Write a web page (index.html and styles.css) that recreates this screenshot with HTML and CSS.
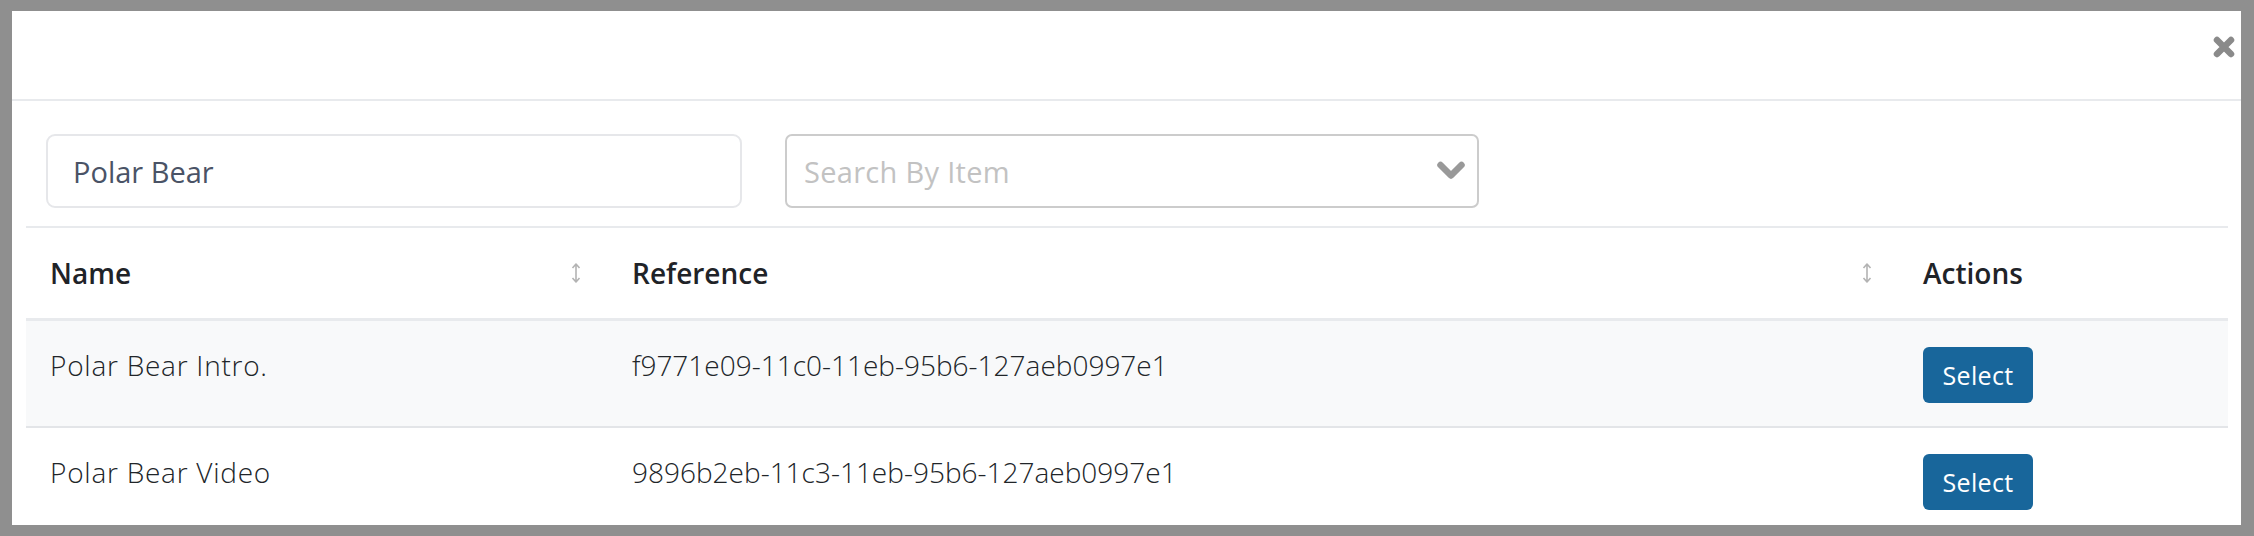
FILE: index.html
```html
<!DOCTYPE html>
<html lang="en">
<head>
<meta charset="utf-8">
<title>Select item</title>
<link rel="stylesheet" href="styles.css">
</head>
<body>
<div class="modal">
  <div class="modal-header">
    <button class="close" aria-label="Close">
      <svg viewBox="0 0 22 22" width="22" height="22"><path d="M4 4 L18 18 M18 4 L4 18" stroke="#8a8a8a" stroke-width="6.5" stroke-linecap="round"/></svg>
    </button>
  </div>
  <div class="modal-body">
    <div class="filters">
      <input class="text-input" type="text" value="Polar Bear">
      <div class="select">
        <span class="placeholder">Search By Item</span>
        <svg class="chevron" viewBox="0 0 28 20" width="28" height="20"><polyline points="3.5,4 14,14.5 24.5,4" fill="none" stroke="#999" stroke-width="6.5" stroke-linecap="round" stroke-linejoin="round"/></svg>
      </div>
    </div>
    <table class="grid">
      <colgroup>
        <col class="c-name"><col class="c-ref"><col class="c-act">
      </colgroup>
      <thead>
        <tr>
          <th><div class="th-in"><span>Name</span><svg class="sort" viewBox="0 0 10 22" width="10" height="22"><path d="M5 2 V20 M1.5 6 L5 2 L8.5 6 M1.5 16 L5 20 L8.5 16" fill="none" stroke="#b3b3b3" stroke-width="1.6" stroke-linejoin="round"/></svg></div></th>
          <th><div class="th-in"><span>Reference</span><svg class="sort" viewBox="0 0 10 22" width="10" height="22"><path d="M5 2 V20 M1.5 6 L5 2 L8.5 6 M1.5 16 L5 20 L8.5 16" fill="none" stroke="#b3b3b3" stroke-width="1.6" stroke-linejoin="round"/></svg></div></th>
          <th><div class="th-in"><span>Actions</span></div></th>
        </tr>
      </thead>
      <tbody>
        <tr class="odd">
          <td class="name">Polar Bear Intro.</td>
          <td>f9771e09-11c0-11eb-95b6-127aeb0997e1</td>
          <td><button class="btn">Select</button></td>
        </tr>
        <tr>
          <td class="name">Polar Bear Video</td>
          <td>9896b2eb-11c3-11eb-95b6-127aeb0997e1</td>
          <td><button class="btn">Select</button></td>
        </tr>
      </tbody>
    </table>
  </div>
</div>
</body>
</html>
```

FILE: styles.css
```css
* { box-sizing: border-box; }
html, body { margin: 0; padding: 0; }
body {
  background: #8f8f8f;
  font-family: "Open Sans", "Liberation Sans", sans-serif;
  color: #212529;
}
.modal {
  margin: 11px 13px 11px 12px;
  height: 514px;
  background: #fff;
  overflow: hidden;
}
.modal-header {
  height: 90px;
  border-bottom: 2px solid #e8eaed;
  position: relative;
}
.close {
  position: absolute;
  top: 25px;
  right: 6px;
  width: 22px;
  height: 22px;
  padding: 0;
  border: 0;
  background: none;
}
.close svg { display: block; }
.modal-body {
  padding: 33px 13px 0 14px;
}
.filters {
  display: flex;
  gap: 43px;
  padding-left: 20px;
  margin-bottom: 18px;
}
.text-input {
  width: 696px;
  height: 74px;
  border: 2px solid #e6e7ea;
  border-radius: 9px;
  padding: 0 25px;
  font-family: inherit;
  font-size: 29px;
  color: #4a5366;
  outline: none;
}
.select {
  width: 694px;
  height: 74px;
  border: 2px solid #cccccc;
  border-radius: 7px;
  display: flex;
  align-items: center;
  justify-content: space-between;
  padding: 0 12px 0 17px;
}
.placeholder {
  font-size: 29px;
  letter-spacing: 0.3px;
  color: #c2c2c2;
}
.chevron { display: block; }
.grid {
  width: 2202px;
  border-collapse: collapse;
  table-layout: fixed;
  border-top: 2px solid #e8eaed;
}
.c-name { width: 582px; }
.c-ref { width: 1291px; }
.c-act { width: 329px; }
thead tr { height: 92px; }
th {
  padding: 0 27px 0 24px;
  text-align: left;
  font-size: 28px;
  font-weight: 600;
  color: #1f2328;
  border-bottom: 3px solid #e8eaed;
  vertical-align: middle;
}
.th-in {
  display: flex;
  align-items: center;
  justify-content: space-between;
}
.sort { display: block; }
tbody tr { height: 108px; }
tbody tr.odd { background: #f8f9fa; }
tbody tr + tr td { border-top: 2px solid #e3e5e8; }
td {
  padding: 23px 24px 0 24px;
  vertical-align: top;
  font-size: 28px;
  font-weight: 300;
  line-height: 42px;
  color: #212529;
}
td.name { letter-spacing: 0.75px; }
.btn {
  width: 110px;
  height: 56px;
  margin-top: 3px;
  padding: 0;
  border: 0;
  border-radius: 6px;
  background: #18669b;
  color: #fff;
  font-family: inherit;
  font-size: 25px;
  font-weight: 500;
  letter-spacing: 0.3px;
}
```
